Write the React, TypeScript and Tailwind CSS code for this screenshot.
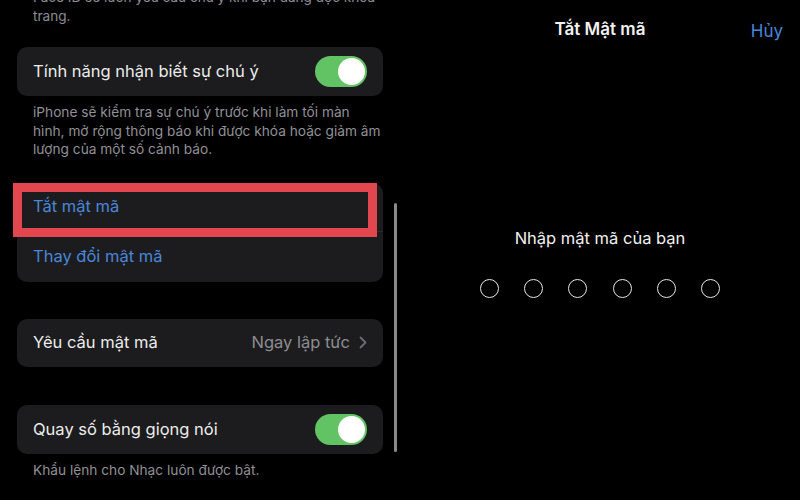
import React from "react";

const font = { fontFamily: 'Inter, "Noto Sans", "Liberation Sans", sans-serif' };

function Toggle() {
  return (
    <div className="w-[52px] h-[31px] rounded-full bg-[#62c364] flex items-center justify-end px-[2px]">
      <div className="w-[27px] h-[27px] rounded-full bg-white" />
    </div>
  );
}

export default function App() {
  return (
    <div className="w-[800px] h-[500px] bg-black overflow-hidden flex text-white" style={font}>
      {/* Left column */}
      <div className="w-[400px] relative pl-[17px] pr-[17px]">
        <div className="-mt-[12px] px-[16px] text-[13.6px] leading-[18.5px] text-[#8d8d92] whitespace-nowrap">
          Face ID sẽ luôn yêu cầu chú ý khi bạn đang đọc khóa
          <br />
          trang.
        </div>

        <div className="mt-[22px] h-[49px] rounded-[10px] bg-[#1c1c1e] flex items-center justify-between pl-[16px] pr-[16px]">
          <span className="text-[16.5px] text-[#ececec]">Tính năng nhận biết sự chú ý</span>
          <Toggle />
        </div>

        <div className="mt-[7px] px-[16px] text-[13.7px] leading-[18.5px] text-[#919196] whitespace-nowrap">
          iPhone sẽ kiểm tra sự chú ý trước khi làm tối màn
          <br />
          hình, mở rộng thông báo khi được khóa hoặc giảm âm
          <br />
          lượng của một số cảnh báo.
        </div>

        <div className="mt-[24px] h-[99px] rounded-[10px] bg-[#1c1c1e] relative flex flex-col">
          <div className="h-[49px] flex items-center pl-[16px] border-b border-[#2c2c2e]">
            <span className="text-[16.5px] text-[#4a86da]">Tắt mật mã</span>
          </div>
          <div className="h-[50px] flex items-center pl-[16px]">
            <span className="text-[16.5px] text-[#4a86da]">Thay đổi mật mã</span>
          </div>
          <div className="absolute -left-[4px] top-0 w-[364px] h-[54px] border-[9px] border-[#e2464f]" />
        </div>

        <div className="mt-[37px] h-[48px] rounded-[10px] bg-[#1c1c1e] flex items-center justify-between pl-[16px] pr-[16px]">
          <span className="text-[16.5px] text-[#ececec]">Yêu cầu mật mã</span>
          <div className="flex items-center gap-[9px]">
            <span className="text-[16.5px] text-[#8d8d92]">Ngay lập tức</span>
            <svg width="8" height="13" viewBox="0 0 8 13" fill="none">
              <path d="M1.5 1.5L6.5 6.5L1.5 11.5" stroke="#6b6b70" strokeWidth="1.8" strokeLinecap="round" strokeLinejoin="round" />
            </svg>
          </div>
        </div>

        <div className="mt-[38px] h-[49px] rounded-[10px] bg-[#1c1c1e] flex items-center justify-between pl-[16px] pr-[16px]">
          <span className="text-[16.5px] text-[#ececec]">Quay số bằng giọng nói</span>
          <Toggle />
        </div>

        <div className="mt-[7px] px-[16px] text-[13.7px] leading-[18.5px] text-[#919196] whitespace-nowrap">
          Khẩu lệnh cho Nhạc luôn được bật.
        </div>

        <div className="absolute left-[394px] top-[203px] w-[3px] h-[249px] rounded-full bg-[#8a8a8a]" />
      </div>

      {/* Right column */}
      <div className="flex-1 flex flex-col items-center">
        <div className="w-full h-[60px] relative flex items-center justify-center">
          <span className="text-[17px] font-semibold text-[#f2f2f2]">Tắt Mật mã</span>
          <span className="absolute right-[17px] top-[19px] text-[17px] text-[#4a86da]">Hủy</span>
        </div>
        <div className="mt-[167px] text-[16.5px] leading-[22px] text-[#f2f2f2]">Nhập mật mã của bạn</div>
        <div className="mt-[30px] flex gap-[25.4px]">
          {[0, 1, 2, 3, 4, 5].map((i) => (
            <div key={i} className="w-[19px] h-[19px] rounded-full border-[1.5px] border-[#e8e8e8]" />
          ))}
        </div>
      </div>
    </div>
  );
}
